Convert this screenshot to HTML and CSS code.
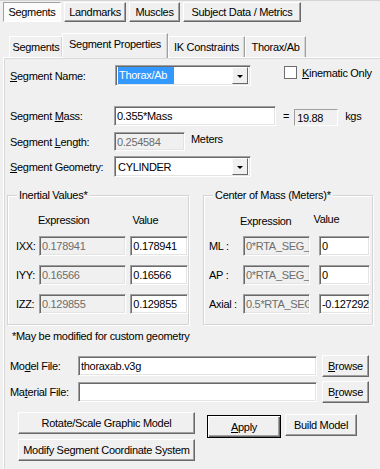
FILE: index.html
```html
<!DOCTYPE html>
<html lang="en">
<head>
  <meta charset="UTF-8">
  <link rel="stylesheet" href="styles.css">
  <title>Segment Properties</title>
</head>
<body>
<!-- tab principali in alto -->
<div class="toptabs">
  <div class="tbtn tbtn-on">Segments</div>
  <div class="tbtn w-land">Landmarks</div>
  <div class="tbtn w-musc">Muscles</div>
  <div class="tbtn w-subj">Subject Data / Metrics</div>
</div>

<!-- tab secondarie -->
<div class="tabs">
  <div class="tab t1">Segments</div>
  <div class="tab tab-on t2">Segment Properties</div>
  <div class="tab t3">IK Constraints</div>
  <div class="tab t4">Thorax/Ab</div>
</div>

<div class="panel">
  <div class="row r-name">
    <label class="lbl"><u>S</u>egment Name:</label>
    <div class="combo c-name">
      <span class="sel">Thorax/Ab</span>
      <span class="drop"><i></i></span>
    </div>
    <div class="check"><span class="box"></span><u>K</u>inematic Only</div>
  </div>

  <div class="row r-mass">
    <label class="lbl lbl-mass">Segment <u>M</u>ass:</label>
    <div class="edit e-mass">0.355*Mass</div>
    <span class="eq">=</span>
    <div class="edit e-kg">19.88</div>
    <span class="unit">kgs</span>
  </div>

  <div class="row r-len">
    <label class="lbl lbl-mass">Segment <u>L</u>ength:</label>
    <div class="edit e-len dis">0.254584</div>
    <span class="unit u-m">Meters</span>
  </div>

  <div class="row r-geo">
    <label class="lbl lbl-mass"><u>S</u>egment Geometry:</label>
    <div class="combo c-geo">
      <span class="txt">CYLINDER</span>
      <span class="drop"><i></i></span>
    </div>
  </div>

  <div class="groups">
    <div class="grp g-in">
      <span class="legend">Inertial Values*</span>
      <div class="hdr"><span class="h-exp">Expression</span><span class="h-val">Value</span></div>
      <div class="irow"><span class="ilbl">IXX:</span><div class="edit ie dis">0.178941</div><div class="edit iv">0.178941</div></div>
      <div class="irow"><span class="ilbl">IYY:</span><div class="edit ie dis">0.16566</div><div class="edit iv">0.16566</div></div>
      <div class="irow"><span class="ilbl">IZZ:</span><div class="edit ie dis">0.129855</div><div class="edit iv">0.129855</div></div>
    </div>

    <div class="grp g-cm">
      <span class="legend">Center of Mass (Meters)*</span>
      <div class="hdr"><span class="h-exp2">Expression</span><span class="h-val2">Value</span></div>
      <div class="crow"><span class="clbl">ML :</span><div class="edit ce dis">0*RTA_SEG_</div><div class="edit cv">0</div></div>
      <div class="crow"><span class="clbl">AP :</span><div class="edit ce dis">0*RTA_SEG_</div><div class="edit cv">0</div></div>
      <div class="crow"><span class="clbl">Axial :</span><div class="edit ce dis">0.5*RTA_SEG_</div><div class="edit cv">-0.127292</div></div>
    </div>
  </div>

  <div class="note">*May be modified for custom geometry</div>

  <div class="frow f1">
    <label class="flbl">Mo<u>d</u>el File:</label>
    <div class="edit fe">thoraxab.v3g</div>
    <div class="btn b-br"><u>B</u>rowse</div>
  </div>
  <div class="frow f2">
    <label class="flbl">Ma<u>t</u>erial File:</label>
    <div class="edit fe"></div>
    <div class="btn b-br">B<u>r</u>owse</div>
  </div>

  <div class="actions">
    <div class="col">
      <div class="btn b-wide">Rotate/Scale Graphic Model</div>
      <div class="btn b-wide b-mod">Modify Segment Coordinate System</div>
    </div>
    <div class="btn b-apply"><u>A</u>pply</div>
    <div class="btn b-build">Build Model</div>
  </div>
</div>
</body>
</html>
```

FILE: styles.css
```css
body {
  margin: 0;
  background-color: #f0f0f0;
  font-family: "Liberation Sans", Arial, sans-serif;
  font-size: 11px;
  letter-spacing: -0.3px;
  color: #000;
  overflow: hidden;
  white-space: nowrap;
}

u {
  text-decoration: underline;
  text-underline-offset: 1px;
}

/* tab in alto stile pulsante */
.toptabs {
  display: flex;
  gap: 3px;
  padding: 1px 0 0 3px;
  border-top: 1px solid #d4d4d4;
  height: 22px;
}

.tbtn {
  box-sizing: border-box;
  height: 20px;
  width: 58px;
  display: flex;
  align-items: center;
  justify-content: center;
  background-color: #f0f0f0;
  border: 1px solid;
  border-color: #fff #696969 #696969 #fff;
  box-shadow: inset -1px -1px 0 #a0a0a0;
}

.tbtn-on {
  background-color: #fbfbfb;
  border-color: #a0a0a0 #fff #fff #a0a0a0;
  box-shadow: none;
}

.w-land { width: 62px; }
.w-musc { width: 51px; }
.w-subj { width: 118px; }

/* tab secondarie */
.tabs {
  display: flex;
  align-items: flex-end;
  margin-top: 9px;
  padding-left: 9px;
  height: 24px;
}

.tab {
  box-sizing: border-box;
  height: 21px;
  display: flex;
  align-items: center;
  justify-content: center;
  border: 1px solid;
  border-bottom: none;
  border-color: #fff #a0a0a0 #fff #fff;
  box-shadow: inset -1px 0 0 #d4d4d4;
}

.t1 { width: 54px; }
.t2 { width: 106px; }
.t3 { width: 77px; }
.t4 { width: 61px; }

.tab-on {
  height: 25px;
  padding-bottom: 4px;
  margin-bottom: -1px;
  margin-left: -1px;
  background-color: #f0f0f0;
  position: relative;
  z-index: 1;
}

.panel {
  margin-left: 3px;
  border-top: 1px solid #fff;
  border-left: 1px solid #fff;
  box-shadow: inset 1px 1px 0 #d9d9d9;
  padding: 7px 0 0 6px;
  height: 420px;
}

.row {
  display: flex;
  align-items: center;
}

.lbl {
  width: 105px;
}

.lbl-mass {
  width: 104px;
}

.combo {
  box-sizing: border-box;
  height: 21px;
  background-color: #fff;
  border: 1px solid;
  border-color: #a0a0a0 #fff #fff #a0a0a0;
  box-shadow: inset 1px 1px 0 #696969, inset -1px -1px 0 #e3e3e3;
  display: flex;
  align-items: center;
  padding: 0 2px 0 2px;
  justify-content: space-between;
}

.c-name { width: 136px; }
.c-geo { width: 137px; }

.sel {
  background-color: #3399ff;
  color: #fff;
  height: 17px;
  line-height: 17px;
  width: 55px;
  padding-left: 1px;
}

.txt {
  padding-left: 1px;
}

.drop {
  box-sizing: border-box;
  width: 16px;
  height: 17px;
  background-color: #f0f0f0;
  border: 1px solid;
  border-color: #fff #696969 #696969 #fff;
  display: flex;
  align-items: center;
  justify-content: center;
}

.drop i {
  width: 0;
  height: 0;
  border-left: 3px solid transparent;
  border-right: 3px solid transparent;
  border-top: 3px solid #000;
  margin-top: 1px;
}

.check {
  display: flex;
  align-items: center;
  margin-left: 33px;
  margin-top: -6px;
}

.box {
  width: 11px;
  height: 11px;
  background-color: #fff;
  border: 1px solid #6d6d6d;
  margin-right: 5px;
}

.edit {
  box-sizing: border-box;
  height: 20px;
  background-color: #fff;
  border: 1px solid;
  border-color: #a0a0a0 #fff #fff #a0a0a0;
  box-shadow: inset 1px 1px 0 #696969, inset -1px -1px 0 #e3e3e3;
  padding: 0 2px;
  display: flex;
  align-items: center;
  overflow: hidden;
}

.dis {
  background-color: #f0f0f0;
  color: #6d6d6d;
}

.r-mass {
  margin-top: 19px;
}

.e-mass { width: 162px; }

.eq {
  margin: 0 0 0 7px;
}

.e-kg {
  width: 44px;
  height: 17px;
  margin: 4px 0 0 5px;
  background-color: #f0f0f0;
  box-shadow: none;
}

.unit {
  margin-left: 7px;
}

.r-len {
  margin-top: 6px;
}

.e-len {
  width: 71px;
  height: 19px;
}

.u-m {
  margin-left: 6px;
  margin-top: -6px;
}

.r-geo {
  margin-top: 5px;
}

/* riquadri */
.groups {
  display: flex;
  margin-top: 18px;
  margin-left: -3px;
}

.grp {
  box-sizing: border-box;
  border: 1px solid #d5d5d5;
  box-shadow: 1px 1px 0 #fff, inset 1px 1px 0 #fff;
  height: 130px;
  position: relative;
}

.legend {
  position: absolute;
  top: -7px;
  left: 9px;
  padding: 0 2px;
  background-color: #f0f0f0;
}

.g-in {
  width: 182px;
}

.g-cm {
  width: 170px;
  margin-left: 14px;
}

.hdr {
  display: flex;
  height: 14px;
  margin-top: 18px;
}

.h-exp { margin-left: 30px; }
.h-val { margin-left: 43px; }
.h-exp2 { margin-left: 36px; margin-top: 1px; }
.h-val2 { margin-left: 22px; margin-top: -1px; }

.irow,
.crow {
  display: flex;
  align-items: center;
  margin-top: 9px;
}

.hdr + .irow,
.hdr + .crow {
  margin-top: 8px;
}

.ilbl {
  width: 32px;
  padding-left: 8px;
  box-sizing: border-box;
}

.ie { width: 91px; }

.iv {
  width: 60px;
  margin-left: 4px;
}

.clbl {
  width: 39px;
  padding-left: 5px;
  box-sizing: border-box;
}

.ce { width: 67px; }

.cv {
  width: 51px;
  margin-left: 9px;
}

.note {
  margin-top: 5px;
  margin-left: 2px;
}

.frow {
  display: flex;
  align-items: center;
}

.f1 { margin-top: 13px; }
.f2 { margin-top: 4px; }

.flbl {
  width: 68px;
}

.fe { width: 239px; }

.btn {
  box-sizing: border-box;
  background-color: #f0f0f0;
  border: 1px solid;
  border-color: #fff #696969 #696969 #fff;
  box-shadow: inset -1px -1px 0 #a0a0a0;
  display: flex;
  align-items: center;
  justify-content: center;
}

.b-br {
  width: 47px;
  height: 22px;
  margin-left: 5px;
}

.actions {
  display: flex;
  align-items: flex-start;
  margin-top: 9px;
  margin-left: 8px;
}

.col {
  display: flex;
  flex-direction: column;
  gap: 5px;
}

.b-wide {
  width: 177px;
  height: 22px;
}

.b-apply {
  width: 74px;
  height: 23px;
  margin-left: 12px;
  margin-top: 3px;
  border: 1px solid #000;
  box-shadow: inset 1px 1px 0 #fff, inset -1px -1px 0 #696969, inset -2px -2px 0 #a0a0a0;
}

.b-build {
  width: 72px;
  height: 22px;
  margin-left: 4px;
  margin-top: 2px;
}
```
